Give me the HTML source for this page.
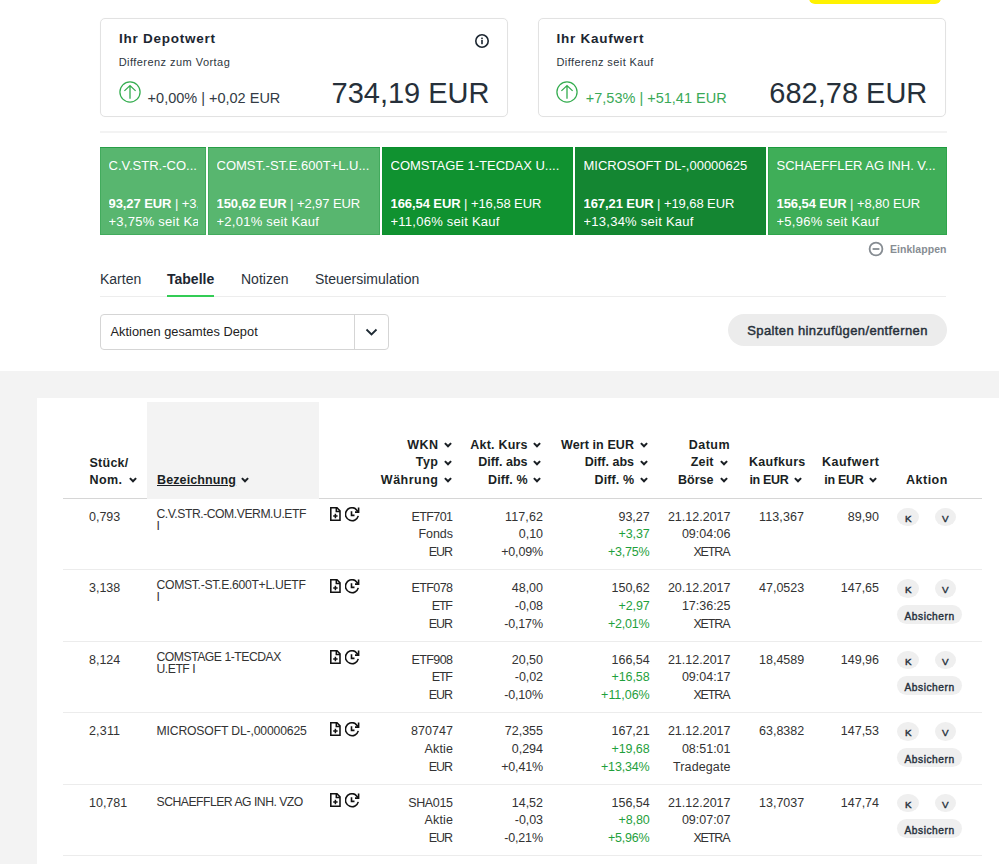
<!DOCTYPE html>
<html><head><meta charset="utf-8"><style>
html,body{margin:0;padding:0;}
body{width:999px;height:864px;overflow:hidden;position:relative;background:#fff;font-family:"Liberation Sans", sans-serif;}
.t{position:absolute;white-space:nowrap;}
</style></head><body>
<div style="position:absolute;left:808.5px;top:-10px;width:132.5px;height:13.5px;background:#fff200;border-radius:0 0 6px 6px;"></div>
<div style="position:absolute;left:100px;top:18px;width:408px;height:99px;box-sizing:border-box;border:1px solid #e2e2e2;box-shadow:0 0 1px 0 rgba(0,0,0,0.05);border-radius:5px;"></div>
<div style="position:absolute;left:538px;top:18px;width:408px;height:99px;box-sizing:border-box;border:1px solid #e2e2e2;box-shadow:0 0 1px 0 rgba(0,0,0,0.05);border-radius:5px;"></div>
<div style="position:absolute;left:100px;top:131px;width:847px;height:2px;background:#f3f3f3;"></div>
<div class="t" style="top:29.55px;font-size:13.5px;line-height:17.55px;font-weight:700;color:#1c2631;letter-spacing:0.75px;left:119px;">Ihr Depotwert</div>
<div class="t" style="top:55.04px;font-size:11px;line-height:14.3px;font-weight:400;color:#2d3640;letter-spacing:0.45px;left:118.7px;">Differenz zum Vortag</div>
<div class="t" style="top:88.75px;font-size:14.5px;line-height:18.85px;font-weight:400;color:#333b44;left:147.6px;">+0,00% | +0,02 EUR</div>
<div class="t" style="top:75.40px;font-size:29px;line-height:37.7px;font-weight:400;color:#26303a;right:509.5px;text-align:right;">734,19 EUR</div>
<div class="t" style="top:29.55px;font-size:13.5px;line-height:17.55px;font-weight:700;color:#1c2631;letter-spacing:0.75px;left:556.5px;">Ihr Kaufwert</div>
<div class="t" style="top:55.04px;font-size:11px;line-height:14.3px;font-weight:400;color:#2d3640;letter-spacing:0.4px;left:556.5px;">Differenz seit Kauf</div>
<div class="t" style="top:88.75px;font-size:14.5px;line-height:18.85px;font-weight:400;color:#3aa957;left:585.8px;">+7,53% | +51,41 EUR</div>
<div class="t" style="top:75.40px;font-size:29px;line-height:37.7px;font-weight:400;color:#26303a;right:71.70000000000005px;text-align:right;">682,78 EUR</div>
<svg style="position:absolute;left:118.85px;top:80.75px" width="22" height="22" viewBox="0 0 22 22"><circle cx="11" cy="11" r="10.1" fill="none" stroke="#34ad4f" stroke-width="1.25"/><path d="M11 17.8V5M5.4 9.9L11 4.6L16.6 9.9" fill="none" stroke="#34ad4f" stroke-width="1.3"/></svg>
<svg style="position:absolute;left:556.3px;top:80.75px" width="22" height="22" viewBox="0 0 22 22"><circle cx="11" cy="11" r="10.1" fill="none" stroke="#34ad4f" stroke-width="1.25"/><path d="M11 17.8V5M5.4 9.9L11 4.6L16.6 9.9" fill="none" stroke="#34ad4f" stroke-width="1.3"/></svg>
<svg style="position:absolute;left:474.2px;top:33.2px" width="16" height="16" viewBox="0 0 16 16"><circle cx="8" cy="8" r="6.2" fill="none" stroke="#1c2631" stroke-width="1.6"/><rect x="7.2" y="7" width="1.6" height="4.2" fill="#1c2631"/><rect x="7.2" y="4.6" width="1.6" height="1.6" fill="#1c2631"/></svg>
<div style="position:absolute;left:100px;top:147px;width:106px;height:88px;background:#58b66f;overflow:hidden;box-shadow:inset 0 1px 0 rgba(0,140,40,0.4), inset 0 0 0 1px rgba(0,140,40,0.25)"><div style="position:absolute;left:8.5px;top:0;right:8px;bottom:0;overflow:hidden"><div class="t" style="left:0;top:10.70px;font-size:13px;line-height:16px;font-weight:400;color:#fff;letter-spacing:0px">C.V.STR.-CO...</div><div class="t" style="left:0;top:48.90px;font-size:13px;line-height:16px;font-weight:400;color:#fff;letter-spacing:-0.08px"><b>93,27 EUR</b> | +3,37 EUR</div><div class="t" style="left:0;top:66.50px;font-size:13px;line-height:16px;font-weight:400;color:#fff;letter-spacing:0.25px">+3,75% seit Kauf</div></div></div>
<div style="position:absolute;left:208px;top:147px;width:172px;height:88px;background:#58b66f;overflow:hidden;box-shadow:inset 0 1px 0 rgba(0,140,40,0.4), inset 0 0 0 1px rgba(0,140,40,0.25)"><div style="position:absolute;left:8.5px;top:0;right:8px;bottom:0;overflow:hidden"><div class="t" style="left:0;top:10.70px;font-size:13px;line-height:16px;font-weight:400;color:#fff;letter-spacing:0px">COMST.-ST.E.600T+L.U...</div><div class="t" style="left:0;top:48.90px;font-size:13px;line-height:16px;font-weight:400;color:#fff;letter-spacing:-0.08px"><b>150,62 EUR</b> | +2,97 EUR</div><div class="t" style="left:0;top:66.50px;font-size:13px;line-height:16px;font-weight:400;color:#fff;letter-spacing:0.25px">+2,01% seit Kauf</div></div></div>
<div style="position:absolute;left:382px;top:147px;width:191px;height:88px;background:#109230;overflow:hidden;box-shadow:inset 0 1px 0 rgba(0,140,40,0.4), inset 0 0 0 1px rgba(0,140,40,0.25)"><div style="position:absolute;left:8.5px;top:0;right:8px;bottom:0;overflow:hidden"><div class="t" style="left:0;top:10.70px;font-size:13px;line-height:16px;font-weight:400;color:#fff;letter-spacing:0px">COMSTAGE 1-TECDAX U....</div><div class="t" style="left:0;top:48.90px;font-size:13px;line-height:16px;font-weight:400;color:#fff;letter-spacing:-0.08px"><b>166,54 EUR</b> | +16,58 EUR</div><div class="t" style="left:0;top:66.50px;font-size:13px;line-height:16px;font-weight:400;color:#fff;letter-spacing:0.25px">+11,06% seit Kauf</div></div></div>
<div style="position:absolute;left:575px;top:147px;width:191px;height:88px;background:#148632;overflow:hidden;box-shadow:inset 0 1px 0 rgba(0,140,40,0.4), inset 0 0 0 1px rgba(0,140,40,0.25)"><div style="position:absolute;left:8.5px;top:0;right:8px;bottom:0;overflow:hidden"><div class="t" style="left:0;top:10.70px;font-size:13px;line-height:16px;font-weight:400;color:#fff;letter-spacing:0px">MICROSOFT DL-,00000625</div><div class="t" style="left:0;top:48.90px;font-size:13px;line-height:16px;font-weight:400;color:#fff;letter-spacing:-0.08px"><b>167,21 EUR</b> | +19,68 EUR</div><div class="t" style="left:0;top:66.50px;font-size:13px;line-height:16px;font-weight:400;color:#fff;letter-spacing:0.25px">+13,34% seit Kauf</div></div></div>
<div style="position:absolute;left:768px;top:147px;width:179px;height:88px;background:#3fae58;overflow:hidden;box-shadow:inset 0 1px 0 rgba(0,140,40,0.4), inset 0 0 0 1px rgba(0,140,40,0.25)"><div style="position:absolute;left:8.5px;top:0;right:8px;bottom:0;overflow:hidden"><div class="t" style="left:0;top:10.70px;font-size:13px;line-height:16px;font-weight:400;color:#fff;letter-spacing:0px">SCHAEFFLER AG INH. V...</div><div class="t" style="left:0;top:48.90px;font-size:13px;line-height:16px;font-weight:400;color:#fff;letter-spacing:-0.08px"><b>156,54 EUR</b> | +8,80 EUR</div><div class="t" style="left:0;top:66.50px;font-size:13px;line-height:16px;font-weight:400;color:#fff;letter-spacing:0.25px">+5,96% seit Kauf</div></div></div>
<svg style="position:absolute;left:868px;top:241.2px" width="16" height="16" viewBox="0 0 16 16"><circle cx="8" cy="8" r="6.4" fill="none" stroke="#868c92" stroke-width="1.8"/><rect x="4.6" y="7.1" width="6.8" height="1.8" fill="#868c92"/></svg>
<div class="t" style="top:243.14px;font-size:10.5px;line-height:13.65px;font-weight:700;color:#878d93;letter-spacing:0.05px;left:890px;">Einklappen</div>
<div class="t" style="top:270.05px;font-size:14px;line-height:18.2px;font-weight:400;color:#2b333c;left:100px;">Karten</div>
<div class="t" style="top:270.05px;font-size:14px;line-height:18.2px;font-weight:700;color:#1c2631;left:167px;">Tabelle</div>
<div class="t" style="top:270.05px;font-size:14px;line-height:18.2px;font-weight:400;color:#2b333c;left:241px;">Notizen</div>
<div class="t" style="top:270.05px;font-size:14px;line-height:18.2px;font-weight:400;color:#2b333c;left:315px;">Steuersimulation</div>
<div style="position:absolute;left:100px;top:296px;width:846px;height:1px;background:#ededed;"></div>
<div style="position:absolute;left:167px;top:294.5px;width:47px;height:2px;background:#33cc55;"></div>
<div style="position:absolute;left:100px;top:314px;width:289px;height:36px;box-sizing:border-box;border:1px solid #d5d5d5;border-radius:4px;"></div>
<div style="position:absolute;left:354px;top:315px;width:1px;height:34px;background:#d5d5d5;"></div>
<div class="t" style="top:324.44px;font-size:12.8px;line-height:16.64px;font-weight:400;color:#222;letter-spacing:0.03px;left:110.5px;">Aktionen gesamtes Depot</div>
<svg style="position:absolute;left:364px;top:327px" width="14" height="10" viewBox="0 0 14 10"><path d="M2.5 2.5L7.5 7.5L12.5 2.5" fill="none" stroke="#1f2b34" stroke-width="1.8"/></svg>
<div style="position:absolute;left:728px;top:314px;width:219px;height:32px;background:#ececec;border-radius:16px;"></div>
<div class="t" style="top:323.35px;font-size:13px;line-height:16.9px;font-weight:400;color:#27303a;letter-spacing:0.38px;left:537.5px;width:600px;text-align:center;-webkit-text-stroke:0.45px #27303a;">Spalten hinzufügen/entfernen</div>
<div style="position:absolute;left:0px;top:371px;width:999px;height:493px;background:#f3f3f3;"></div>
<div style="position:absolute;left:37px;top:398px;width:962px;height:466px;background:#fff;"></div>
<div style="position:absolute;left:147.3px;top:402px;width:172px;height:96.5px;background:#f3f3f3;"></div>
<div style="position:absolute;left:63px;top:497.5px;width:84.3px;height:1.5px;background:#d6d6d6;"></div>
<div style="position:absolute;left:319.3px;top:497.5px;width:662.7px;height:1.5px;background:#d6d6d6;"></div>
<div style="position:absolute;left:63px;top:569px;width:919px;height:1px;background:#ececec;"></div>
<div style="position:absolute;left:63px;top:640.5px;width:919px;height:1px;background:#ececec;"></div>
<div style="position:absolute;left:63px;top:712px;width:919px;height:1px;background:#ececec;"></div>
<div style="position:absolute;left:63px;top:783.5px;width:919px;height:1px;background:#ececec;"></div>
<div style="position:absolute;left:63px;top:855px;width:919px;height:1px;background:#ececec;"></div>
<div class="t" style="top:454.54px;font-size:12.5px;line-height:16.25px;font-weight:700;color:#1a1f24;letter-spacing:0.25px;left:89.5px;">Stück/</div>
<div class="t" style="top:472.04px;font-size:12.5px;line-height:16.25px;font-weight:700;color:#1a1f24;letter-spacing:0.4px;left:89.5px;">Nom.</div>
<svg style="position:absolute;left:129px;top:477.2px" width="8" height="6" viewBox="0 0 8 6"><path d="M0.9 1.1L4 4.3L7.1 1.1" fill="none" stroke="#1a1f24" stroke-width="2"/></svg>
<div class="t" style="top:472.04px;font-size:12.5px;line-height:16.25px;font-weight:700;color:#1a1f24;letter-spacing:0.12px;left:157px;text-decoration:underline;">Bezeichnung</div>
<svg style="position:absolute;left:240.5px;top:477.2px" width="8" height="6" viewBox="0 0 8 6"><path d="M0.9 1.1L4 4.3L7.1 1.1" fill="none" stroke="#1a1f24" stroke-width="2"/></svg>
<div class="t" style="top:436.84px;font-size:12.5px;line-height:16.25px;font-weight:700;color:#1a1f24;letter-spacing:0.5px;right:560.5px;text-align:right;">WKN</div>
<svg style="position:absolute;left:443.5px;top:442.0px" width="8" height="6" viewBox="0 0 8 6"><path d="M0.9 1.1L4 4.3L7.1 1.1" fill="none" stroke="#1a1f24" stroke-width="2"/></svg>
<div class="t" style="top:454.34px;font-size:12.5px;line-height:16.25px;font-weight:700;color:#1a1f24;letter-spacing:0.5px;right:560.5px;text-align:right;">Typ</div>
<svg style="position:absolute;left:443.5px;top:459.5px" width="8" height="6" viewBox="0 0 8 6"><path d="M0.9 1.1L4 4.3L7.1 1.1" fill="none" stroke="#1a1f24" stroke-width="2"/></svg>
<div class="t" style="top:471.84px;font-size:12.5px;line-height:16.25px;font-weight:700;color:#1a1f24;letter-spacing:0.5px;right:560.5px;text-align:right;">Währung</div>
<svg style="position:absolute;left:443.5px;top:477.0px" width="8" height="6" viewBox="0 0 8 6"><path d="M0.9 1.1L4 4.3L7.1 1.1" fill="none" stroke="#1a1f24" stroke-width="2"/></svg>
<div class="t" style="top:436.84px;font-size:12.5px;line-height:16.25px;font-weight:700;color:#1a1f24;letter-spacing:0.2px;right:471.3px;text-align:right;">Akt. Kurs</div>
<svg style="position:absolute;left:533px;top:442.0px" width="8" height="6" viewBox="0 0 8 6"><path d="M0.9 1.1L4 4.3L7.1 1.1" fill="none" stroke="#1a1f24" stroke-width="2"/></svg>
<div class="t" style="top:454.34px;font-size:12.5px;line-height:16.25px;font-weight:700;color:#1a1f24;right:471.5px;text-align:right;">Diff. abs</div>
<svg style="position:absolute;left:533px;top:459.5px" width="8" height="6" viewBox="0 0 8 6"><path d="M0.9 1.1L4 4.3L7.1 1.1" fill="none" stroke="#1a1f24" stroke-width="2"/></svg>
<div class="t" style="top:471.84px;font-size:12.5px;line-height:16.25px;font-weight:700;color:#1a1f24;letter-spacing:0.1px;right:471.4px;text-align:right;">Diff. %</div>
<svg style="position:absolute;left:533px;top:477.0px" width="8" height="6" viewBox="0 0 8 6"><path d="M0.9 1.1L4 4.3L7.1 1.1" fill="none" stroke="#1a1f24" stroke-width="2"/></svg>
<div class="t" style="top:436.84px;font-size:12.5px;line-height:16.25px;font-weight:700;color:#1a1f24;letter-spacing:0.1px;right:364.9px;text-align:right;">Wert in EUR</div>
<svg style="position:absolute;left:639.5px;top:442.0px" width="8" height="6" viewBox="0 0 8 6"><path d="M0.9 1.1L4 4.3L7.1 1.1" fill="none" stroke="#1a1f24" stroke-width="2"/></svg>
<div class="t" style="top:454.34px;font-size:12.5px;line-height:16.25px;font-weight:700;color:#1a1f24;right:365.0px;text-align:right;">Diff. abs</div>
<svg style="position:absolute;left:639.5px;top:459.5px" width="8" height="6" viewBox="0 0 8 6"><path d="M0.9 1.1L4 4.3L7.1 1.1" fill="none" stroke="#1a1f24" stroke-width="2"/></svg>
<div class="t" style="top:471.84px;font-size:12.5px;line-height:16.25px;font-weight:700;color:#1a1f24;letter-spacing:0.1px;right:364.9px;text-align:right;">Diff. %</div>
<svg style="position:absolute;left:639.5px;top:477.0px" width="8" height="6" viewBox="0 0 8 6"><path d="M0.9 1.1L4 4.3L7.1 1.1" fill="none" stroke="#1a1f24" stroke-width="2"/></svg>
<div class="t" style="top:436.84px;font-size:12.5px;line-height:16.25px;font-weight:700;color:#1a1f24;letter-spacing:0.5px;right:268.9px;text-align:right;">Datum</div>
<div class="t" style="top:454.34px;font-size:12.5px;line-height:16.25px;font-weight:700;color:#1a1f24;letter-spacing:0.2px;right:285.3px;text-align:right;">Zeit</div>
<svg style="position:absolute;left:720px;top:459.5px" width="8" height="6" viewBox="0 0 8 6"><path d="M0.9 1.1L4 4.3L7.1 1.1" fill="none" stroke="#1a1f24" stroke-width="2"/></svg>
<div class="t" style="top:471.84px;font-size:12.5px;line-height:16.25px;font-weight:700;color:#1a1f24;right:285.5px;text-align:right;">Börse</div>
<svg style="position:absolute;left:720px;top:477.0px" width="8" height="6" viewBox="0 0 8 6"><path d="M0.9 1.1L4 4.3L7.1 1.1" fill="none" stroke="#1a1f24" stroke-width="2"/></svg>
<div class="t" style="top:454.34px;font-size:12.5px;line-height:16.25px;font-weight:700;color:#1a1f24;letter-spacing:0.3px;left:749px;">Kaufkurs</div>
<div class="t" style="top:471.84px;font-size:12.5px;line-height:16.25px;font-weight:700;color:#1a1f24;letter-spacing:-0.35px;left:749.5px;">in EUR</div>
<svg style="position:absolute;left:794px;top:477.0px" width="8" height="6" viewBox="0 0 8 6"><path d="M0.9 1.1L4 4.3L7.1 1.1" fill="none" stroke="#1a1f24" stroke-width="2"/></svg>
<div class="t" style="top:454.34px;font-size:12.5px;line-height:16.25px;font-weight:700;color:#1a1f24;letter-spacing:0.5px;left:822px;">Kaufwert</div>
<div class="t" style="top:471.84px;font-size:12.5px;line-height:16.25px;font-weight:700;color:#1a1f24;letter-spacing:-0.3px;left:824.3px;">in EUR</div>
<svg style="position:absolute;left:869px;top:477.0px" width="8" height="6" viewBox="0 0 8 6"><path d="M0.9 1.1L4 4.3L7.1 1.1" fill="none" stroke="#1a1f24" stroke-width="2"/></svg>
<div class="t" style="top:471.84px;font-size:12.5px;line-height:16.25px;font-weight:700;color:#1a1f24;letter-spacing:0.5px;left:906px;">Aktion</div>
<div class="t" style="top:508.84px;font-size:12.5px;line-height:16.25px;font-weight:400;color:#333;letter-spacing:-0.019px;left:89px;">0,793</div>
<div class="t" style="top:506.74px;font-size:12.2px;line-height:15.86px;font-weight:400;color:#333;letter-spacing:-0.46px;left:156.5px;">C.V.STR.-COM.VERM.U.ETF</div>
<div class="t" style="top:518.94px;font-size:12.2px;line-height:15.86px;font-weight:400;color:#333;letter-spacing:0.028px;left:156.5px;">I</div>
<div class="t" style="top:508.84px;font-size:12.5px;line-height:16.25px;font-weight:400;color:#333;letter-spacing:-0.59px;right:546.59px;text-align:right;">ETF701</div>
<div class="t" style="top:508.84px;font-size:12.5px;line-height:16.25px;font-weight:400;color:#333;letter-spacing:0.148px;right:455.852px;text-align:right;">117,62</div>
<div class="t" style="top:508.84px;font-size:12.5px;line-height:16.25px;font-weight:400;color:#333;letter-spacing:-0.019px;right:349.31899999999996px;text-align:right;">93,27</div>
<div class="t" style="top:508.84px;font-size:12.5px;line-height:16.25px;font-weight:400;color:#333;letter-spacing:0.006px;right:268.494px;text-align:right;">21.12.2017</div>
<div class="t" style="top:526.44px;font-size:12.5px;line-height:16.25px;font-weight:400;color:#333;letter-spacing:-0.032px;right:546.032px;text-align:right;">Fonds</div>
<div class="t" style="top:526.44px;font-size:12.5px;line-height:16.25px;font-weight:400;color:#333;letter-spacing:-0.037px;right:456.037px;text-align:right;">0,10</div>
<div class="t" style="top:526.44px;font-size:12.5px;line-height:16.25px;font-weight:400;color:#1fa03c;letter-spacing:-0.088px;right:349.388px;text-align:right;">+3,37</div>
<div class="t" style="top:526.44px;font-size:12.5px;line-height:16.25px;font-weight:400;color:#333;letter-spacing:-0.006px;right:268.506px;text-align:right;">09:04:06</div>
<div class="t" style="top:544.04px;font-size:12.5px;line-height:16.25px;font-weight:400;color:#333;letter-spacing:-1.031px;right:547.031px;text-align:right;">EUR</div>
<div class="t" style="top:544.04px;font-size:12.5px;line-height:16.25px;font-weight:400;color:#333;letter-spacing:-0.199px;right:456.199px;text-align:right;">+0,09%</div>
<div class="t" style="top:544.04px;font-size:12.5px;line-height:16.25px;font-weight:400;color:#1fa03c;letter-spacing:-0.199px;right:349.49899999999997px;text-align:right;">+3,75%</div>
<div class="t" style="top:544.04px;font-size:12.5px;line-height:16.25px;font-weight:400;color:#333;letter-spacing:-1.14px;right:269.64px;text-align:right;">XETRA</div>
<div class="t" style="top:508.84px;font-size:12.5px;line-height:16.25px;font-weight:400;color:#333;letter-spacing:0.135px;left:759px;">113,367</div>
<div class="t" style="top:508.84px;font-size:12.5px;line-height:16.25px;font-weight:400;color:#333;letter-spacing:-0.019px;right:120.019px;text-align:right;">89,90</div>
<svg style="position:absolute;left:330px;top:507.10px" width="11" height="15" viewBox="0 0 11 15"><path d="M0.8 0.8H7L10 3.9V13.3H0.8Z" fill="none" stroke="#111" stroke-width="1.55" stroke-linejoin="miter"/><path d="M6.3 0.8V4.4H10" fill="none" stroke="#111" stroke-width="1.5"/><path d="M5.4 6.8V11.2M3.2 9H7.6" fill="none" stroke="#111" stroke-width="1.5"/></svg>
<svg style="position:absolute;left:345px;top:507.10px" width="16" height="15" viewBox="0 0 16 15"><path d="M13.28 8.88A6.5 6.5 0 1 1 10.05 1.46L13.1 4.6" fill="none" stroke="#111" stroke-width="1.6"/><path d="M13.6 0.5V5.1H10" fill="none" stroke="#111" stroke-width="1.6"/><path d="M6.5 4.2V8.4H9.5" fill="none" stroke="#111" stroke-width="1.6"/></svg>
<div style="position:absolute;left:897px;top:507.49999999999994px;width:21.6px;height:18.8px;background:#efefef;border-radius:50%;"></div>
<div style="position:absolute;left:935px;top:507.49999999999994px;width:21px;height:18.8px;background:#efefef;border-radius:50%;"></div>
<div class="t" style="top:512.63px;font-size:9.9px;line-height:12.87px;font-weight:400;color:#26303b;left:608.2px;width:600px;text-align:center;-webkit-text-stroke:0.4px #26303b;">K</div>
<div class="t" style="top:512.63px;font-size:9.9px;line-height:12.87px;font-weight:400;color:#26303b;left:645.4px;width:600px;text-align:center;-webkit-text-stroke:0.4px #26303b;">V</div>
<div class="t" style="top:580.34px;font-size:12.5px;line-height:16.25px;font-weight:400;color:#333;letter-spacing:-0.019px;left:89px;">3,138</div>
<div class="t" style="top:578.24px;font-size:12.2px;line-height:15.86px;font-weight:400;color:#333;letter-spacing:-0.307px;left:156.5px;">COMST.-ST.E.600T+L.UETF</div>
<div class="t" style="top:590.44px;font-size:12.2px;line-height:15.86px;font-weight:400;color:#333;letter-spacing:0.028px;left:156.5px;">I</div>
<div class="t" style="top:580.34px;font-size:12.5px;line-height:16.25px;font-weight:400;color:#333;letter-spacing:-0.59px;right:546.59px;text-align:right;">ETF078</div>
<div class="t" style="top:580.34px;font-size:12.5px;line-height:16.25px;font-weight:400;color:#333;letter-spacing:-0.019px;right:456.019px;text-align:right;">48,00</div>
<div class="t" style="top:580.34px;font-size:12.5px;line-height:16.25px;font-weight:400;color:#333;letter-spacing:-0.006px;right:349.3059999999999px;text-align:right;">150,62</div>
<div class="t" style="top:580.34px;font-size:12.5px;line-height:16.25px;font-weight:400;color:#333;letter-spacing:0.006px;right:268.494px;text-align:right;">20.12.2017</div>
<div class="t" style="top:597.94px;font-size:12.5px;line-height:16.25px;font-weight:400;color:#333;letter-spacing:-1.234px;right:547.234px;text-align:right;">ETF</div>
<div class="t" style="top:597.94px;font-size:12.5px;line-height:16.25px;font-weight:400;color:#333;letter-spacing:-0.073px;right:456.073px;text-align:right;">-0,08</div>
<div class="t" style="top:597.94px;font-size:12.5px;line-height:16.25px;font-weight:400;color:#1fa03c;letter-spacing:-0.088px;right:349.388px;text-align:right;">+2,97</div>
<div class="t" style="top:597.94px;font-size:12.5px;line-height:16.25px;font-weight:400;color:#333;letter-spacing:-0.006px;right:268.506px;text-align:right;">17:36:25</div>
<div class="t" style="top:615.54px;font-size:12.5px;line-height:16.25px;font-weight:400;color:#333;letter-spacing:-1.031px;right:547.031px;text-align:right;">EUR</div>
<div class="t" style="top:615.54px;font-size:12.5px;line-height:16.25px;font-weight:400;color:#333;letter-spacing:-0.186px;right:456.186px;text-align:right;">-0,17%</div>
<div class="t" style="top:615.54px;font-size:12.5px;line-height:16.25px;font-weight:400;color:#1fa03c;letter-spacing:-0.199px;right:349.49899999999997px;text-align:right;">+2,01%</div>
<div class="t" style="top:615.54px;font-size:12.5px;line-height:16.25px;font-weight:400;color:#333;letter-spacing:-1.14px;right:269.64px;text-align:right;">XETRA</div>
<div class="t" style="top:580.34px;font-size:12.5px;line-height:16.25px;font-weight:400;color:#333;letter-spacing:0.002px;left:759px;">47,0523</div>
<div class="t" style="top:580.34px;font-size:12.5px;line-height:16.25px;font-weight:400;color:#333;letter-spacing:-0.006px;right:120.006px;text-align:right;">147,65</div>
<svg style="position:absolute;left:330px;top:578.60px" width="11" height="15" viewBox="0 0 11 15"><path d="M0.8 0.8H7L10 3.9V13.3H0.8Z" fill="none" stroke="#111" stroke-width="1.55" stroke-linejoin="miter"/><path d="M6.3 0.8V4.4H10" fill="none" stroke="#111" stroke-width="1.5"/><path d="M5.4 6.8V11.2M3.2 9H7.6" fill="none" stroke="#111" stroke-width="1.5"/></svg>
<svg style="position:absolute;left:345px;top:578.60px" width="16" height="15" viewBox="0 0 16 15"><path d="M13.28 8.88A6.5 6.5 0 1 1 10.05 1.46L13.1 4.6" fill="none" stroke="#111" stroke-width="1.6"/><path d="M13.6 0.5V5.1H10" fill="none" stroke="#111" stroke-width="1.6"/><path d="M6.5 4.2V8.4H9.5" fill="none" stroke="#111" stroke-width="1.6"/></svg>
<div style="position:absolute;left:897px;top:579.0px;width:21.6px;height:18.8px;background:#efefef;border-radius:50%;"></div>
<div style="position:absolute;left:935px;top:579.0px;width:21px;height:18.8px;background:#efefef;border-radius:50%;"></div>
<div class="t" style="top:584.13px;font-size:9.9px;line-height:12.87px;font-weight:400;color:#26303b;left:608.2px;width:600px;text-align:center;-webkit-text-stroke:0.4px #26303b;">K</div>
<div class="t" style="top:584.13px;font-size:9.9px;line-height:12.87px;font-weight:400;color:#26303b;left:645.4px;width:600px;text-align:center;-webkit-text-stroke:0.4px #26303b;">V</div>
<div style="position:absolute;left:897px;top:604.5999999999999px;width:65px;height:19.2px;background:#efefef;border-radius:10px;"></div>
<div class="t" style="top:609.74px;font-size:10.2px;line-height:13.26px;font-weight:400;color:#26303b;letter-spacing:0.55px;left:629.6px;width:600px;text-align:center;-webkit-text-stroke:0.4px #26303b;">Absichern</div>
<div class="t" style="top:651.84px;font-size:12.5px;line-height:16.25px;font-weight:400;color:#333;letter-spacing:-0.019px;left:89px;">8,124</div>
<div class="t" style="top:649.74px;font-size:12.2px;line-height:15.86px;font-weight:400;color:#333;letter-spacing:-0.477px;left:156.5px;">COMSTAGE 1-TECDAX</div>
<div class="t" style="top:661.94px;font-size:12.2px;line-height:15.86px;font-weight:400;color:#333;letter-spacing:-0.473px;left:156.5px;">U.ETF I</div>
<div class="t" style="top:651.84px;font-size:12.5px;line-height:16.25px;font-weight:400;color:#333;letter-spacing:-0.59px;right:546.59px;text-align:right;">ETF908</div>
<div class="t" style="top:651.84px;font-size:12.5px;line-height:16.25px;font-weight:400;color:#333;letter-spacing:-0.019px;right:456.019px;text-align:right;">20,50</div>
<div class="t" style="top:651.84px;font-size:12.5px;line-height:16.25px;font-weight:400;color:#333;letter-spacing:-0.006px;right:349.3059999999999px;text-align:right;">166,54</div>
<div class="t" style="top:651.84px;font-size:12.5px;line-height:16.25px;font-weight:400;color:#333;letter-spacing:0.006px;right:268.494px;text-align:right;">21.12.2017</div>
<div class="t" style="top:669.44px;font-size:12.5px;line-height:16.25px;font-weight:400;color:#333;letter-spacing:-1.234px;right:547.234px;text-align:right;">ETF</div>
<div class="t" style="top:669.44px;font-size:12.5px;line-height:16.25px;font-weight:400;color:#333;letter-spacing:-0.073px;right:456.073px;text-align:right;">-0,02</div>
<div class="t" style="top:669.44px;font-size:12.5px;line-height:16.25px;font-weight:400;color:#1fa03c;letter-spacing:-0.064px;right:349.364px;text-align:right;">+16,58</div>
<div class="t" style="top:669.44px;font-size:12.5px;line-height:16.25px;font-weight:400;color:#333;letter-spacing:-0.006px;right:268.506px;text-align:right;">09:04:17</div>
<div class="t" style="top:687.04px;font-size:12.5px;line-height:16.25px;font-weight:400;color:#333;letter-spacing:-1.031px;right:547.031px;text-align:right;">EUR</div>
<div class="t" style="top:687.04px;font-size:12.5px;line-height:16.25px;font-weight:400;color:#333;letter-spacing:-0.186px;right:456.186px;text-align:right;">-0,10%</div>
<div class="t" style="top:687.04px;font-size:12.5px;line-height:16.25px;font-weight:400;color:#1fa03c;letter-spacing:-0.03px;right:349.3299999999999px;text-align:right;">+11,06%</div>
<div class="t" style="top:687.04px;font-size:12.5px;line-height:16.25px;font-weight:400;color:#333;letter-spacing:-1.14px;right:269.64px;text-align:right;">XETRA</div>
<div class="t" style="top:651.84px;font-size:12.5px;line-height:16.25px;font-weight:400;color:#333;letter-spacing:0.002px;left:759px;">18,4589</div>
<div class="t" style="top:651.84px;font-size:12.5px;line-height:16.25px;font-weight:400;color:#333;letter-spacing:-0.006px;right:120.006px;text-align:right;">149,96</div>
<svg style="position:absolute;left:330px;top:650.10px" width="11" height="15" viewBox="0 0 11 15"><path d="M0.8 0.8H7L10 3.9V13.3H0.8Z" fill="none" stroke="#111" stroke-width="1.55" stroke-linejoin="miter"/><path d="M6.3 0.8V4.4H10" fill="none" stroke="#111" stroke-width="1.5"/><path d="M5.4 6.8V11.2M3.2 9H7.6" fill="none" stroke="#111" stroke-width="1.5"/></svg>
<svg style="position:absolute;left:345px;top:650.10px" width="16" height="15" viewBox="0 0 16 15"><path d="M13.28 8.88A6.5 6.5 0 1 1 10.05 1.46L13.1 4.6" fill="none" stroke="#111" stroke-width="1.6"/><path d="M13.6 0.5V5.1H10" fill="none" stroke="#111" stroke-width="1.6"/><path d="M6.5 4.2V8.4H9.5" fill="none" stroke="#111" stroke-width="1.6"/></svg>
<div style="position:absolute;left:897px;top:650.5px;width:21.6px;height:18.8px;background:#efefef;border-radius:50%;"></div>
<div style="position:absolute;left:935px;top:650.5px;width:21px;height:18.8px;background:#efefef;border-radius:50%;"></div>
<div class="t" style="top:655.63px;font-size:9.9px;line-height:12.87px;font-weight:400;color:#26303b;left:608.2px;width:600px;text-align:center;-webkit-text-stroke:0.4px #26303b;">K</div>
<div class="t" style="top:655.63px;font-size:9.9px;line-height:12.87px;font-weight:400;color:#26303b;left:645.4px;width:600px;text-align:center;-webkit-text-stroke:0.4px #26303b;">V</div>
<div style="position:absolute;left:897px;top:676.0999999999999px;width:65px;height:19.2px;background:#efefef;border-radius:10px;"></div>
<div class="t" style="top:681.24px;font-size:10.2px;line-height:13.26px;font-weight:400;color:#26303b;letter-spacing:0.55px;left:629.6px;width:600px;text-align:center;-webkit-text-stroke:0.4px #26303b;">Absichern</div>
<div class="t" style="top:723.34px;font-size:12.5px;line-height:16.25px;font-weight:400;color:#333;letter-spacing:0.167px;left:89px;">2,311</div>
<div class="t" style="top:723.64px;font-size:12.2px;line-height:15.86px;font-weight:400;color:#333;letter-spacing:-0.153px;left:156.5px;">MICROSOFT DL-,00000625</div>
<div class="t" style="top:723.34px;font-size:12.5px;line-height:16.25px;font-weight:400;color:#333;letter-spacing:0.055px;right:545.945px;text-align:right;">870747</div>
<div class="t" style="top:723.34px;font-size:12.5px;line-height:16.25px;font-weight:400;color:#333;letter-spacing:-0.006px;right:456.006px;text-align:right;">72,355</div>
<div class="t" style="top:723.34px;font-size:12.5px;line-height:16.25px;font-weight:400;color:#333;letter-spacing:-0.006px;right:349.3059999999999px;text-align:right;">167,21</div>
<div class="t" style="top:723.34px;font-size:12.5px;line-height:16.25px;font-weight:400;color:#333;letter-spacing:0.006px;right:268.494px;text-align:right;">21.12.2017</div>
<div class="t" style="top:740.94px;font-size:12.5px;line-height:16.25px;font-weight:400;color:#333;letter-spacing:0.16px;right:545.84px;text-align:right;">Aktie</div>
<div class="t" style="top:740.94px;font-size:12.5px;line-height:16.25px;font-weight:400;color:#333;letter-spacing:-0.019px;right:456.019px;text-align:right;">0,294</div>
<div class="t" style="top:740.94px;font-size:12.5px;line-height:16.25px;font-weight:400;color:#1fa03c;letter-spacing:-0.064px;right:349.364px;text-align:right;">+19,68</div>
<div class="t" style="top:740.94px;font-size:12.5px;line-height:16.25px;font-weight:400;color:#333;letter-spacing:-0.006px;right:268.506px;text-align:right;">08:51:01</div>
<div class="t" style="top:758.54px;font-size:12.5px;line-height:16.25px;font-weight:400;color:#333;letter-spacing:-1.031px;right:547.031px;text-align:right;">EUR</div>
<div class="t" style="top:758.54px;font-size:12.5px;line-height:16.25px;font-weight:400;color:#333;letter-spacing:-0.199px;right:456.199px;text-align:right;">+0,41%</div>
<div class="t" style="top:758.54px;font-size:12.5px;line-height:16.25px;font-weight:400;color:#1fa03c;letter-spacing:-0.162px;right:349.46199999999993px;text-align:right;">+13,34%</div>
<div class="t" style="top:758.54px;font-size:12.5px;line-height:16.25px;font-weight:400;color:#333;letter-spacing:0.127px;right:268.373px;text-align:right;">Tradegate</div>
<div class="t" style="top:723.34px;font-size:12.5px;line-height:16.25px;font-weight:400;color:#333;letter-spacing:0.002px;left:759px;">63,8382</div>
<div class="t" style="top:723.34px;font-size:12.5px;line-height:16.25px;font-weight:400;color:#333;letter-spacing:-0.006px;right:120.006px;text-align:right;">147,53</div>
<svg style="position:absolute;left:330px;top:721.60px" width="11" height="15" viewBox="0 0 11 15"><path d="M0.8 0.8H7L10 3.9V13.3H0.8Z" fill="none" stroke="#111" stroke-width="1.55" stroke-linejoin="miter"/><path d="M6.3 0.8V4.4H10" fill="none" stroke="#111" stroke-width="1.5"/><path d="M5.4 6.8V11.2M3.2 9H7.6" fill="none" stroke="#111" stroke-width="1.5"/></svg>
<svg style="position:absolute;left:345px;top:721.60px" width="16" height="15" viewBox="0 0 16 15"><path d="M13.28 8.88A6.5 6.5 0 1 1 10.05 1.46L13.1 4.6" fill="none" stroke="#111" stroke-width="1.6"/><path d="M13.6 0.5V5.1H10" fill="none" stroke="#111" stroke-width="1.6"/><path d="M6.5 4.2V8.4H9.5" fill="none" stroke="#111" stroke-width="1.6"/></svg>
<div style="position:absolute;left:897px;top:722.0px;width:21.6px;height:18.8px;background:#efefef;border-radius:50%;"></div>
<div style="position:absolute;left:935px;top:722.0px;width:21px;height:18.8px;background:#efefef;border-radius:50%;"></div>
<div class="t" style="top:727.13px;font-size:9.9px;line-height:12.87px;font-weight:400;color:#26303b;left:608.2px;width:600px;text-align:center;-webkit-text-stroke:0.4px #26303b;">K</div>
<div class="t" style="top:727.13px;font-size:9.9px;line-height:12.87px;font-weight:400;color:#26303b;left:645.4px;width:600px;text-align:center;-webkit-text-stroke:0.4px #26303b;">V</div>
<div style="position:absolute;left:897px;top:747.5999999999999px;width:65px;height:19.2px;background:#efefef;border-radius:10px;"></div>
<div class="t" style="top:752.74px;font-size:10.2px;line-height:13.26px;font-weight:400;color:#26303b;letter-spacing:0.55px;left:629.6px;width:600px;text-align:center;-webkit-text-stroke:0.4px #26303b;">Absichern</div>
<div class="t" style="top:794.84px;font-size:12.5px;line-height:16.25px;font-weight:400;color:#333;letter-spacing:-0.006px;left:89px;">10,781</div>
<div class="t" style="top:795.14px;font-size:12.2px;line-height:15.86px;font-weight:400;color:#333;letter-spacing:-0.491px;left:156.5px;">SCHAEFFLER AG INH. VZO</div>
<div class="t" style="top:794.84px;font-size:12.5px;line-height:16.25px;font-weight:400;color:#333;letter-spacing:-0.336px;right:546.336px;text-align:right;">SHA015</div>
<div class="t" style="top:794.84px;font-size:12.5px;line-height:16.25px;font-weight:400;color:#333;letter-spacing:-0.019px;right:456.019px;text-align:right;">14,52</div>
<div class="t" style="top:794.84px;font-size:12.5px;line-height:16.25px;font-weight:400;color:#333;letter-spacing:-0.006px;right:349.3059999999999px;text-align:right;">156,54</div>
<div class="t" style="top:794.84px;font-size:12.5px;line-height:16.25px;font-weight:400;color:#333;letter-spacing:0.006px;right:268.494px;text-align:right;">21.12.2017</div>
<div class="t" style="top:812.44px;font-size:12.5px;line-height:16.25px;font-weight:400;color:#333;letter-spacing:0.16px;right:545.84px;text-align:right;">Aktie</div>
<div class="t" style="top:812.44px;font-size:12.5px;line-height:16.25px;font-weight:400;color:#333;letter-spacing:-0.073px;right:456.073px;text-align:right;">-0,03</div>
<div class="t" style="top:812.44px;font-size:12.5px;line-height:16.25px;font-weight:400;color:#1fa03c;letter-spacing:-0.088px;right:349.388px;text-align:right;">+8,80</div>
<div class="t" style="top:812.44px;font-size:12.5px;line-height:16.25px;font-weight:400;color:#333;letter-spacing:-0.006px;right:268.506px;text-align:right;">09:07:07</div>
<div class="t" style="top:830.04px;font-size:12.5px;line-height:16.25px;font-weight:400;color:#333;letter-spacing:-1.031px;right:547.031px;text-align:right;">EUR</div>
<div class="t" style="top:830.04px;font-size:12.5px;line-height:16.25px;font-weight:400;color:#333;letter-spacing:-0.186px;right:456.186px;text-align:right;">-0,21%</div>
<div class="t" style="top:830.04px;font-size:12.5px;line-height:16.25px;font-weight:400;color:#1fa03c;letter-spacing:-0.199px;right:349.49899999999997px;text-align:right;">+5,96%</div>
<div class="t" style="top:830.04px;font-size:12.5px;line-height:16.25px;font-weight:400;color:#333;letter-spacing:-1.14px;right:269.64px;text-align:right;">XETRA</div>
<div class="t" style="top:794.84px;font-size:12.5px;line-height:16.25px;font-weight:400;color:#333;letter-spacing:0.002px;left:759px;">13,7037</div>
<div class="t" style="top:794.84px;font-size:12.5px;line-height:16.25px;font-weight:400;color:#333;letter-spacing:-0.006px;right:120.006px;text-align:right;">147,74</div>
<svg style="position:absolute;left:330px;top:793.10px" width="11" height="15" viewBox="0 0 11 15"><path d="M0.8 0.8H7L10 3.9V13.3H0.8Z" fill="none" stroke="#111" stroke-width="1.55" stroke-linejoin="miter"/><path d="M6.3 0.8V4.4H10" fill="none" stroke="#111" stroke-width="1.5"/><path d="M5.4 6.8V11.2M3.2 9H7.6" fill="none" stroke="#111" stroke-width="1.5"/></svg>
<svg style="position:absolute;left:345px;top:793.10px" width="16" height="15" viewBox="0 0 16 15"><path d="M13.28 8.88A6.5 6.5 0 1 1 10.05 1.46L13.1 4.6" fill="none" stroke="#111" stroke-width="1.6"/><path d="M13.6 0.5V5.1H10" fill="none" stroke="#111" stroke-width="1.6"/><path d="M6.5 4.2V8.4H9.5" fill="none" stroke="#111" stroke-width="1.6"/></svg>
<div style="position:absolute;left:897px;top:793.5px;width:21.6px;height:18.8px;background:#efefef;border-radius:50%;"></div>
<div style="position:absolute;left:935px;top:793.5px;width:21px;height:18.8px;background:#efefef;border-radius:50%;"></div>
<div class="t" style="top:798.63px;font-size:9.9px;line-height:12.87px;font-weight:400;color:#26303b;left:608.2px;width:600px;text-align:center;-webkit-text-stroke:0.4px #26303b;">K</div>
<div class="t" style="top:798.63px;font-size:9.9px;line-height:12.87px;font-weight:400;color:#26303b;left:645.4px;width:600px;text-align:center;-webkit-text-stroke:0.4px #26303b;">V</div>
<div style="position:absolute;left:897px;top:819.0999999999999px;width:65px;height:19.2px;background:#efefef;border-radius:10px;"></div>
<div class="t" style="top:824.24px;font-size:10.2px;line-height:13.26px;font-weight:400;color:#26303b;letter-spacing:0.55px;left:629.6px;width:600px;text-align:center;-webkit-text-stroke:0.4px #26303b;">Absichern</div>
</body></html>
